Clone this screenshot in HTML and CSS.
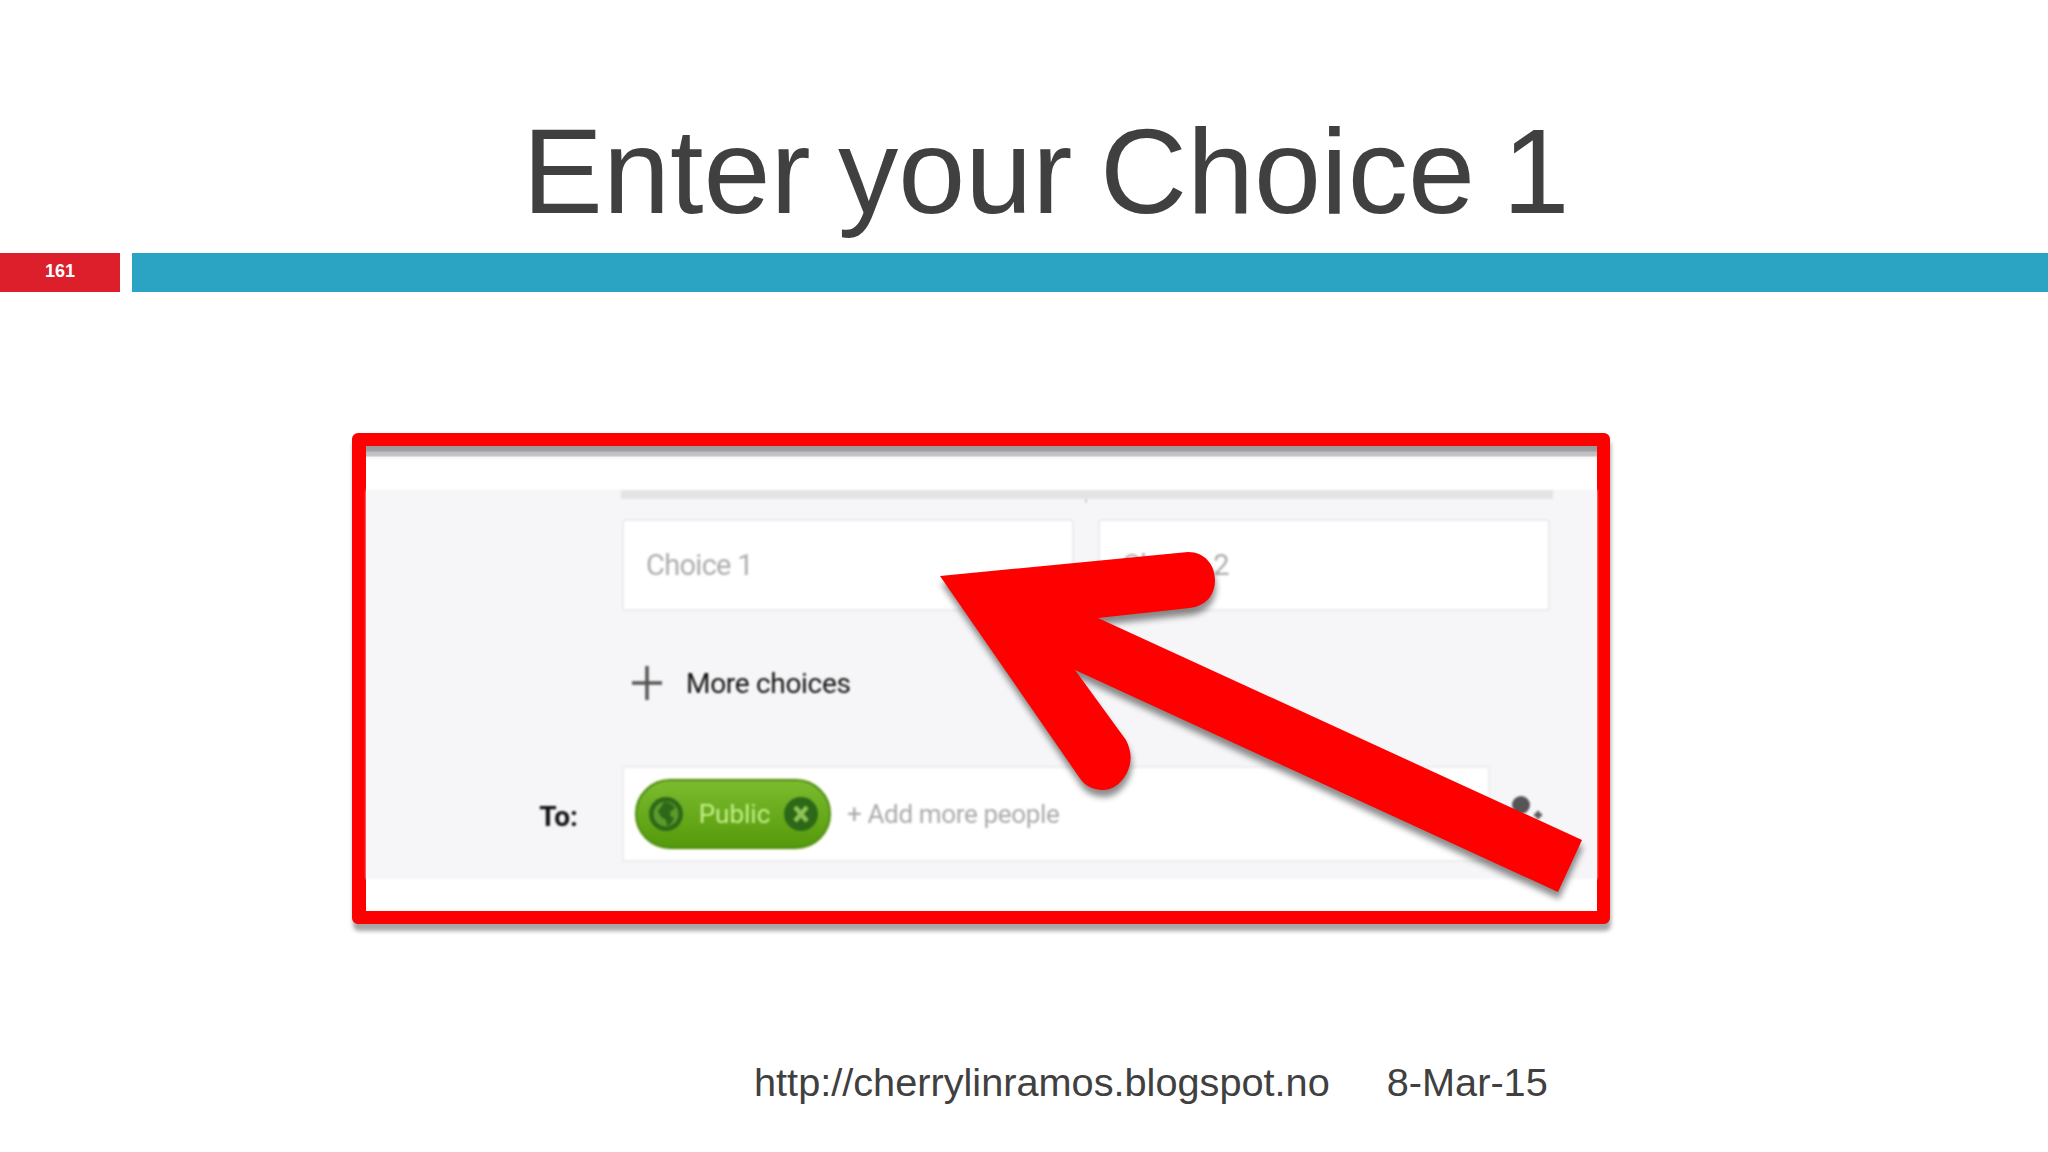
FILE: index.html
```html
<!DOCTYPE html>
<html lang="en">
<head>
    <meta charset="UTF-8">
    <title>Enter your Choice 1</title>
    <link rel="stylesheet" href="styles.css">
</head>
<body>
    <div class="slide">
        <h1 class="slide-title">Enter your Choice 1</h1>
        <div class="slide-bar">
            <div class="page-number">161</div>
            <div class="bar-fill"></div>
        </div>

        <div class="frame">
            <div class="panel">
                <div class="panel-rule"></div>
                <div class="choices">
                    <div class="choice-input">Choice 1</div>
                    <div class="choice-input">Choice 2</div>
                </div>
                <div class="more-choices">
                    <svg class="plus-icon" viewBox="0 0 30 34">
                        <path d="M0 17H30M15 0V34" />
                    </svg>
                    <span>More choices</span>
                </div>
                <div class="to-row">
                    <div class="to-label">To:</div>
                    <div class="people-input">
                        <div class="public-pill">
                            <svg class="pill-icon" viewBox="0 0 34 34">
                                <circle cx="17" cy="17" r="17" fill="#2d6818" />
                                <circle cx="17" cy="17" r="12.5" fill="#5d9a2c" />
                                <path d="M15 5C19 5 24 7 26 11L21 15L22 20L25 20C24 25 21 28 18 29L17 23L12 20L9 14L12 10Z" fill="#2d6818" />
                            </svg>
                            <span class="pill-text">Public</span>
                            <svg class="pill-icon" viewBox="0 0 34 34">
                                <circle cx="17" cy="17" r="17" fill="#2d6818" />
                                <path d="M11 10L23 24M23 10L11 24" stroke="#8fc455" stroke-width="4.500" />
                            </svg>
                        </div>
                        <span class="add-people">+ Add more people</span>
                    </div>
                    <svg class="person-icon" viewBox="0 0 34 34">
                        <circle cx="13" cy="10" r="9" fill="#555" />
                        <path d="M0 30C2 21 24 21 26 30V34H0Z" fill="#555" />
                        <path d="M26 20H34M30 16V24" stroke="#555" stroke-width="3" />
                    </svg>
                </div>
            </div>

            <!-- the big arrow drawn on top of the screenshot -->
            <svg class="arrow" viewBox="366 446 1231 465">
                <path d="M940 576L1188 552C1205 552 1215 565 1215 580C1215 596 1205 606 1190 608L1098 618L1582 840L1558 892L1075 670L1126 740C1132 752 1132 762 1127 773C1120 785 1112 790 1103 790C1092 790 1084 785 1079 777Z" />
            </svg>
        </div>

        <div class="slide-footer">
            <span class="footer-url">http://cherrylinramos.blogspot.no</span>
            <span class="footer-date">8-Mar-15</span>
        </div>
    </div>
</body>
</html>
```

FILE: styles.css
```css
body {
    margin: 0;
    background: #fff;
    font-family: "Liberation Sans", Arial, sans-serif;
}

.slide {
    width: 2048px;
    height: 1152px;
    overflow: hidden;
    background: #fff;
}

.slide-title {
    margin: 0;
    height: 253px;
    box-sizing: border-box;
    padding: 104px 0 0 44px;
    text-align: center;
    font-size: 120.5px;
    font-weight: normal;
    word-spacing: -6px;
    line-height: 136px;
    color: #404040;
}

.slide-bar {
    display: flex;
    gap: 12px;
    height: 39px;
}

.page-number {
    width: 120px;
    background: #dd1f2c;
    color: #fff;
    font-size: 18px;
    font-weight: bold;
    line-height: 36px;
    text-align: center;
}

.bar-fill {
    flex: 1;
    background: #2ba3c2;
}

.frame {
    position: relative;
    width: 1231px;
    height: 421px;
    margin: 141px 0 0 352px;
    padding-top: 44px;
    border: solid #fe0000;
    border-width: 13px 13px 13px 14px;
    border-radius: 6px;
    background: linear-gradient(#98989c, #a0a0a4 5px, #bdbdc0 6px, #c6c6c9 10px, #f6f6f6 11px, #fff 14px) no-repeat top / 100% 14px #fff;
    box-shadow: 1px 7px 4px rgba(0, 0, 0, 0.35);
}

.panel {
    height: 389px;
    padding-left: 255px;
    box-sizing: border-box;
    background: #f6f6f8;
    font-family: Roboto, sans-serif;
    filter: blur(0.9px);
}

.panel-rule {
    position: relative;
    width: 932px;
    height: 9px;
    background: #e4e4e6;
}

.panel-rule::after {
    content: "";
    position: absolute;
    left: 464px;
    top: 9px;
    width: 2px;
    height: 4px;
    background: #cfcfd2;
}

.choices {
    display: flex;
    gap: 24px;
    margin: 20px 0 0 1px;
}

.choice-input {
    width: 452px;
    height: 92px;
    box-sizing: border-box;
    padding-left: 22px;
    background: #fff;
    border: 2px solid #ebebed;
    border-radius: 3px;
    font-size: 29px;
    letter-spacing: -0.7px;
    line-height: 88px;
    color: #adadad;
}

.more-choices {
    display: flex;
    align-items: center;
    gap: 24px;
    height: 34px;
    margin: 55px 0 0 11px;
    font-size: 28px;
    letter-spacing: -0.3px;
    color: #111;
}

.plus-icon {
    width: 30px;
    height: 34px;
    fill: none;
    stroke: #555;
    stroke-width: 3.500;
}

.to-row {
    display: flex;
    align-items: center;
    margin: 66px 0 0 -255px;
}

.to-label {
    width: 256px;
    padding: 5px 44px 0 0;
    box-sizing: border-box;
    text-align: right;
    font-size: 28px;
    font-weight: bold;
    color: #111;
}

.people-input {
    display: flex;
    align-items: center;
    width: 868px;
    height: 96px;
    padding-left: 11px;
    box-sizing: border-box;
    background: #fff;
    border: 2px solid #ededef;
}

.public-pill {
    display: flex;
    align-items: center;
    justify-content: space-between;
    width: 196px;
    height: 70px;
    padding: 0 11px 0 12px;
    box-sizing: border-box;
    border: 2px solid #4f8c14;
    border-radius: 35px;
    background: linear-gradient(#7cbb2f, #559a0b);
    box-shadow: 0 0 2px #d8f08a;
}

.pill-icon {
    width: 34px;
    height: 34px;
}

.pill-text {
    font-size: 26px;
    color: #c6f08c;
    margin-left: 2px;
}

.add-people {
    margin-left: 16px;
    font-size: 26px;
    letter-spacing: -0.35px;
    color: #aaa;
}

.person-icon {
    width: 34px;
    height: 34px;
    margin: -5px 0 0 18px;
}

.arrow {
    position: absolute;
    left: 0;
    top: 0;
    width: 1231px;
    height: 465px;
    overflow: visible;
    fill: #fe0000;
    filter: drop-shadow(1px 7px 3px rgba(0, 0, 0, 0.45));
}

.slide-footer {
    display: flex;
    gap: 57px;
    margin: 135px 0 0 754px;
    font-size: 39.7px;
    line-height: 46px;
    color: #404040;
}
```
